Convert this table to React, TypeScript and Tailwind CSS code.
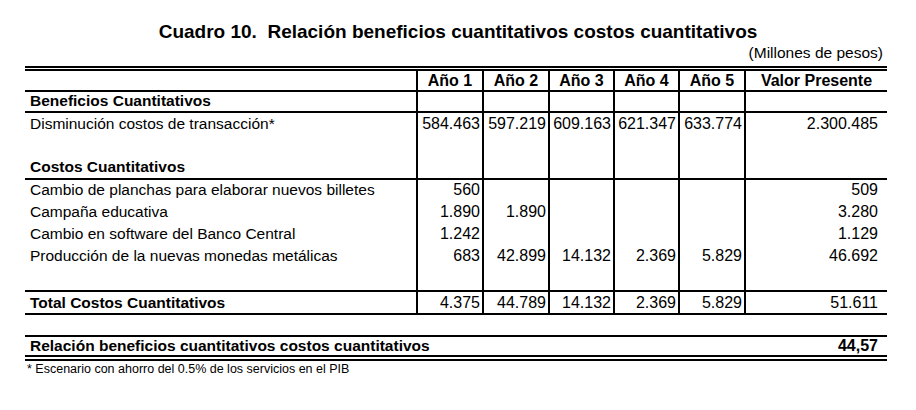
import React from "react";

const font = { fontFamily: '"Liberation Sans", Arial, sans-serif' };

function Cells({ vals, vp, bold }: { vals: string[]; vp: string; bold?: boolean }) {
  return (
    <>
      {vals.map((v, i) => (
        <div
          key={i}
          className={`border-l-2 border-black pr-[2px] text-right text-[16px] whitespace-nowrap ${bold ? "font-bold" : ""}`}
        >
          {v}
        </div>
      ))}
      <div className={`border-l-2 border-black pr-[9px] text-right text-[16px] ${bold ? "font-bold" : ""}`}>{vp}</div>
    </>
  );
}

export default function App() {
  const grid = "grid grid-cols-[391px_66px_66px_65px_65px_66px_143px] items-stretch";
  return (
    <div className="w-[916px] h-[410px] bg-white text-black" style={font}>
      <div className="pt-[20px] text-center text-[19px] leading-[24px] font-bold whitespace-pre">
        {"Cuadro 10.  Relación beneficios cuantitativos costos cuantitativos"}
      </div>
      <div className="pr-[33px] text-right text-[15.5px] leading-[17px]">(Millones de pesos)</div>

      <div className="ml-[25px] w-[862px] mt-[5px] text-[15.5px]">
        <div className="h-[2px] bg-black" />
        <div className="h-[1px]" />
        <div className="h-[2px] bg-black" />

        {/* header */}
        <div className={`${grid} h-[21px] border-b-2 border-black leading-[19px] font-bold`}>
          <div />
          {["Año 1", "Año 2", "Año 3", "Año 4", "Año 5"].map((t) => (
            <div key={t} className="border-l-2 border-black text-center text-[16px]">
              {t}
            </div>
          ))}
          <div className="border-l-2 border-black text-center text-[16px]">Valor Presente</div>
        </div>

        {/* Beneficios */}
        <div className={`${grid} h-[21px] border-b-2 border-black leading-[18px] font-bold`}>
          <div className="pl-[5px]">Beneficios Cuantitativos</div>
          <Cells vals={["", "", "", "", ""]} vp="" />
        </div>

        <div className={`${grid} h-[21px] leading-[21px]`}>
          <div className="pl-[5px]">Disminución costos de transacción*</div>
          <Cells vals={["584.463", "597.219", "609.163", "621.347", "633.774"]} vp="2.300.485" />
        </div>
        <div className={`${grid} h-[22px]`}>
          <div />
          <Cells vals={["", "", "", "", ""]} vp="" />
        </div>
        <div className={`${grid} h-[24px] border-b-2 border-black leading-[22px] font-bold`}>
          <div className="pl-[5px]">Costos Cuantitativos</div>
          <Cells vals={["", "", "", "", ""]} vp="" />
        </div>

        {[
          ["Cambio de planchas para elaborar nuevos billetes", ["560", "", "", "", ""], "509"],
          ["Campaña educativa", ["1.890", "1.890", "", "", ""], "3.280"],
          ["Cambio en software del Banco Central", ["1.242", "", "", "", ""], "1.129"],
          ["Producción de la nuevas monedas metálicas", ["683", "42.899", "14.132", "2.369", "5.829"], "46.692"],
        ].map(([l, v, p]) => (
          <div key={l as string} className={`${grid} h-[22px] leading-[20px]`}>
            <div className="pl-[5px]">{l as string}</div>
            <Cells vals={v as string[]} vp={p as string} />
          </div>
        ))}
        <div className={`${grid} h-[24px] border-b-2 border-black`}>
          <div />
          <Cells vals={["", "", "", "", ""]} vp="" />
        </div>

        <div className={`${grid} h-[23px] border-b-2 border-black leading-[21px]`}>
          <div className="pl-[5px] font-bold">Total Costos Cuantitativos</div>
          <Cells vals={["4.375", "44.789", "14.132", "2.369", "5.829"]} vp="51.611" />
        </div>

        <div className="mt-[20px] h-[2px] bg-black" />
        <div className="flex justify-between h-[18px] leading-[18px] font-bold pl-[5px] pr-[9px]">
          <span>Relación beneficios cuantitativos costos cuantitativos</span>
          <span className="text-[16px]">44,57</span>
        </div>
        <div className="h-[2px] bg-black" />
        <div className="h-[2px]" />
        <div className="h-[2px] bg-black" />
        <div className="pl-[2px] text-[12.5px] leading-[14px] mt-[1px]">
          * Escenario con ahorro del 0.5% de los servicios en el PIB
        </div>
      </div>
    </div>
  );
}
